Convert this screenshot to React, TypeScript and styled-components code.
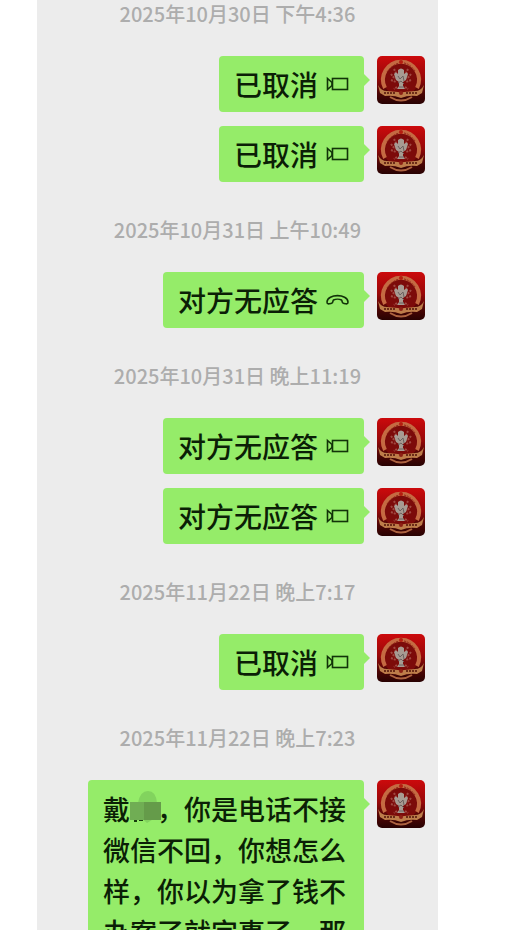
import React from "react";
import styled, { createGlobalStyle } from "styled-components";

const GlobalStyle = createGlobalStyle`
  * { box-sizing: border-box; }
  body { margin: 0; background: #fff; }
`;

const Page = styled.main`
  height: 100vh;
  overflow: hidden;
  padding: 0 83px 0 37px;
  font-family: "Noto Sans CJK SC", sans-serif;
  font-weight: 500;
`;

const Chat = styled.section`
  min-height: 100%;
  padding: 2px 13px 0;
  background: #ececec;
`;

const Stamp = styled.time`
  display: block;
  margin: 36px 0 30px;
  color: #adadad;
  font-size: 20px;
  line-height: 24px;
  text-align: center;
  white-space: nowrap;

  &:first-child { margin-top: 0; }
`;

const Row = styled.div`
  display: flex;
  justify-content: flex-end;
  align-items: flex-start;
  gap: 13px;

  & + & { margin-top: 14px; }
`;

const Bubble = styled.div`
  position: relative;
  max-width: 276px;
  padding: 8px 15px;
  border-radius: 4px;
  background: #95ec69;
  color: #0b1f06;
  font-size: 27px;
  line-height: 41px;

  &::after {
    content: "";
    position: absolute;
    top: 18px;
    left: 100%;
    border: solid transparent;
    border-width: 6px 0 6px 6px;
    border-left-color: #95ec69;
  }
`;

const CallBubble = styled(Bubble)`
  display: flex;
  align-items: center;
  gap: 8px;
  height: 56px;
  font-size: 28px;
`;

const Mask = styled.svg`
  display: inline-block;
  width: 27px;
  height: 30px;
  overflow: visible;
  vertical-align: -5px;
`;

const Picture = styled.svg`
  flex: none;
  width: 48px;
  height: 48px;
  border-radius: 5px;
`;

const VideoIcon = () => (
  <svg width="23" height="16" viewBox="0 0 23 16" fill="none" stroke="#123309" strokeWidth="1.6" aria-hidden="true">
    <rect x="6.5" y="2.5" width="15" height="11" />
    <path d="M1.5 2.500v11L6 9.500V6.500z" />
  </svg>
);

const PhoneIcon = () => (
  <svg width="23" height="16" viewBox="0 0 23 16" fill="none" stroke="#123309" strokeWidth="1.6" strokeLinejoin="round" aria-hidden="true">
    <path d="M1 10C1.500 1.500 21.500 1.500 22 10C22 12.500 20.500 12 17.500 11.300C15.500 10.800 16.500 8.500 15.500 8C13.500 7 9.500 7 7.500 8C6.500 8.500 7.500 10.800 5.500 11.300C2.500 12 1 12.500 1 10Z" />
  </svg>
);

const Avatar = () => (
  <Picture viewBox="0 0 48 48" role="img" aria-label="头像">
    <defs>
      <linearGradient id="avatarRed" x1="0" y1="0" x2="0" y2="1">
        <stop offset="0" stopColor="#cc0a0c" />
        <stop offset="0.45" stopColor="#990809" />
        <stop offset="0.75" stopColor="#500605" />
        <stop offset="1" stopColor="#280202" />
      </linearGradient>
    </defs>
    <rect width="48" height="48" fill="url(#avatarRed)" />
    <circle cx="24" cy="24" r="17" fill="#7c0b0a" />
    <path d="M8 32A18 18 0 1 1 40 32" fill="none" stroke="#c56a42" strokeWidth="4" />
    <path d="M10 16q5-7 12-9M27 7q6 1 11 8" fill="none" stroke="#8e2516" strokeWidth="1" strokeDasharray="2 1" />
    <circle cx="24" cy="6" r="2" fill="#b51d10" />
    <path d="M14 18l4 5M14 24l5 2M34 18l-4 5M34 24l-5 2M17 13l2 4M31 13l-2 4M20 31l-3 2M28 31l3 2" stroke="#a04a42" strokeWidth="2" strokeDasharray="2 1" />
    <path d="M17 18q2-3 4 0v-4q3-3 6 0v4q3-3 4 0l-2 6-3 2v4l2 3h-8l2-3v-4l-3-2z" fill="#a79b92" />
    <path d="M21 20l2 3 3-3 1 5M21 27l3-2 3 3M22 31h5" fill="none" stroke="#6b6260" strokeWidth="1" />
    <path d="M1 29q3 6 9 6l11 1q2 0 3 2 1-2 3-2l11-1q6 0 9-6l-2 8-5 3q-9-1-16 2-7-3-16-2l-5-3z" fill="#bd7d4a" />
    <path d="M7 37h12M29 37h12" stroke="#6b2c18" strokeWidth="2" strokeDasharray="2 1" />
    <path d="M13 41q11 7 22 0" fill="none" stroke="#ad6340" strokeWidth="2" />
    <circle cx="24" cy="37" r="2" fill="#8c2015" />
  </Picture>
);

const Call = ({ text, kind = "video" }: { text: string; kind?: "video" | "phone" }) => (
  <Row>
    <CallBubble>
      <span>{text}</span>
      {kind === "video" ? <VideoIcon /> : <PhoneIcon />}
    </CallBubble>
    <Avatar />
  </Row>
);

export default function App() {
  return (
    <Page>
      <GlobalStyle />
      <Chat>
        <Stamp>2025年10月30日 下午4:36</Stamp>
        <Call text="已取消" />
        <Call text="已取消" />
        <Stamp>2025年10月31日 上午10:49</Stamp>
        <Call text="对方无应答" kind="phone" />
        <Stamp>2025年10月31日 晚上11:19</Stamp>
        <Call text="对方无应答" />
        <Call text="对方无应答" />
        <Stamp>2025年11月22日 晚上7:17</Stamp>
        <Call text="已取消" />
        <Stamp>2025年11月22日 晚上7:23</Stamp>
        <Row>
          <Bubble>
            戴
            <Mask viewBox="0 0 27 30" aria-hidden="true">
              <path d="M4 24h3v3H4zM9 24h4v2H9z" fill="#173c0e" />
              <path d="M8 8Q10-4 18-4T27 8L30 20 17 28 8 20z" fill="#82d35e" />
              <rect x="0" y="7" width="14" height="18" fill="#70ad54" />
              <rect x="14" y="7" width="17" height="18" fill="#659b4a" />
            </Mask>
            ，你是电话不接微信不回，你想怎么样，你以为拿了钱不办案了就完事了，那
          </Bubble>
          <Avatar />
        </Row>
      </Chat>
    </Page>
  );
}
